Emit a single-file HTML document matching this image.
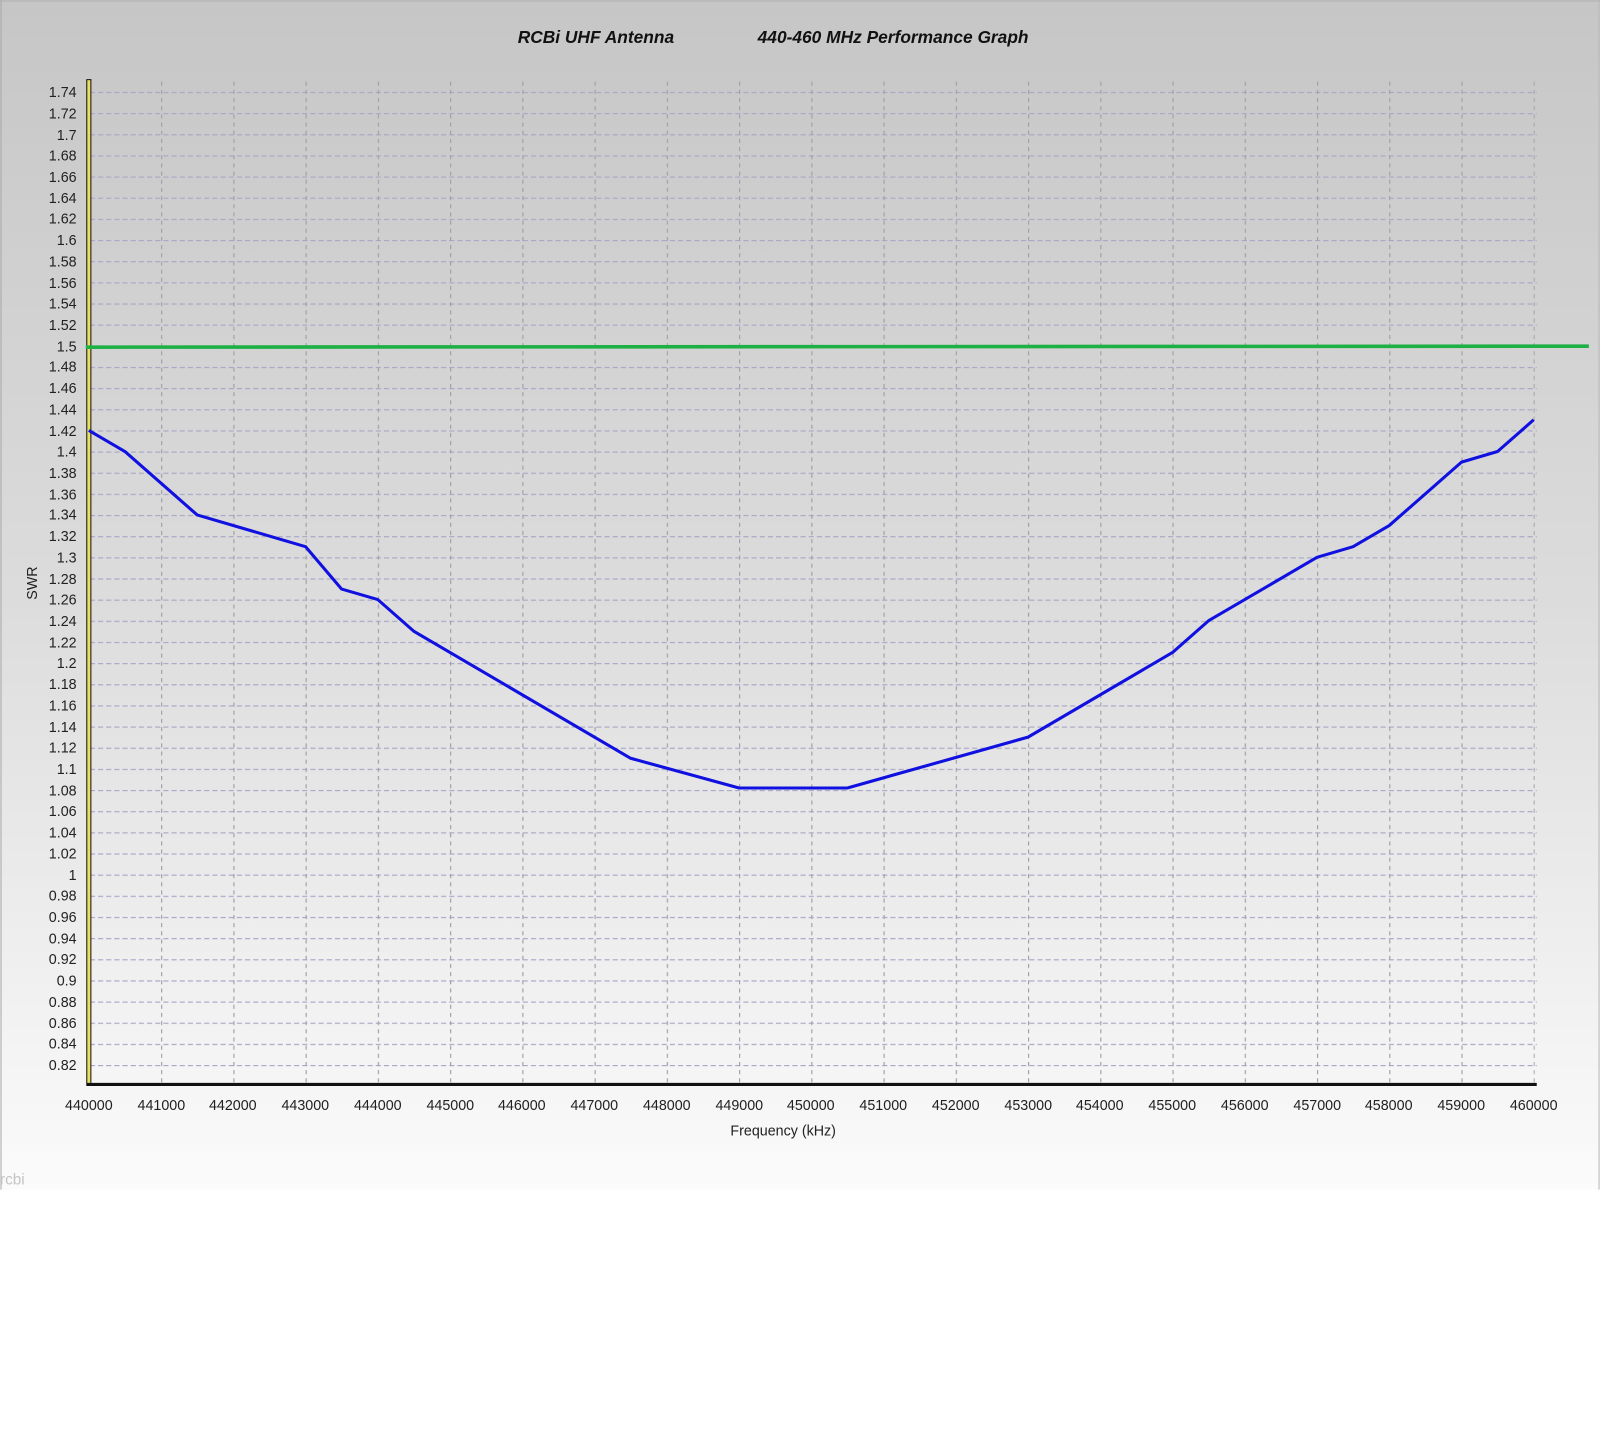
<!DOCTYPE html>
<html><head><style>
html,body{margin:0;padding:0;background:#fff;}
svg{display:block;font-family:"Liberation Sans",Arial,sans-serif;}
</style></head><body>
<svg width="1600" height="1433" viewBox="0 0 1600 1433" xmlns="http://www.w3.org/2000/svg">
<defs>
<linearGradient id="bg" x1="0" y1="0" x2="0" y2="1">
<stop offset="0" stop-color="#c6c6c6"/><stop offset="0.5" stop-color="#dcdcdc"/><stop offset="1" stop-color="#fbfbfb"/>
</linearGradient>
<pattern id="hg" patternUnits="userSpaceOnUse" x="0" y="90" width="8" height="20.717">
<line x1="0" y1="0.5" x2="5" y2="0.5" stroke="#a8a8c8" stroke-width="1.3"/>
</pattern>
<pattern id="vg" patternUnits="userSpaceOnUse" x="87" y="0" width="70.75" height="8">
<line x1="0.5" y1="0" x2="0.5" y2="4" stroke="#a0a0a8" stroke-width="1.3"/>
</pattern>
</defs>
<g transform="scale(1.0211)">
<rect x="0" y="0" width="1567" height="1165" fill="url(#bg)"/>
<line x1="1" y1="0" x2="1" y2="1165" stroke="#a8a8a8"/>
<line x1="1566" y1="0" x2="1566" y2="1165" stroke="#b8b8b8"/>
<line x1="0" y1="1" x2="1567" y2="1" stroke="#b0b0b0"/>
<text x="507" y="42" font-size="17" font-style="italic" font-weight="bold" fill="#111">RCBi UHF Antenna</text>
<text x="742" y="42" font-size="17" font-style="italic" font-weight="bold" fill="#111">440-460 MHz Performance Graph</text>
<rect x="89" y="86" width="1416" height="965" fill="url(#hg)"/>
<rect x="87" y="77" width="1416" height="984" fill="url(#vg)"/>
<g font-size="14" fill="#222" text-anchor="end">
<text x="75" y="95">1.74</text><text x="75" y="116">1.72</text><text x="75" y="137">1.7</text><text x="75" y="157">1.68</text><text x="75" y="178">1.66</text><text x="75" y="199">1.64</text><text x="75" y="219">1.62</text><text x="75" y="240">1.6</text><text x="75" y="261">1.58</text><text x="75" y="282">1.56</text><text x="75" y="302">1.54</text><text x="75" y="323">1.52</text><text x="75" y="344">1.5</text><text x="75" y="364">1.48</text><text x="75" y="385">1.46</text><text x="75" y="406">1.44</text><text x="75" y="427">1.42</text><text x="75" y="447">1.4</text><text x="75" y="468">1.38</text><text x="75" y="489">1.36</text><text x="75" y="509">1.34</text><text x="75" y="530">1.32</text><text x="75" y="551">1.3</text><text x="75" y="572">1.28</text><text x="75" y="592">1.26</text><text x="75" y="613">1.24</text><text x="75" y="634">1.22</text><text x="75" y="654">1.2</text><text x="75" y="675">1.18</text><text x="75" y="696">1.16</text><text x="75" y="717">1.14</text><text x="75" y="737">1.12</text><text x="75" y="758">1.1</text><text x="75" y="779">1.08</text><text x="75" y="799">1.06</text><text x="75" y="820">1.04</text><text x="75" y="841">1.02</text><text x="75" y="862">1</text><text x="75" y="882">0.98</text><text x="75" y="903">0.96</text><text x="75" y="924">0.94</text><text x="75" y="944">0.92</text><text x="75" y="965">0.9</text><text x="75" y="986">0.88</text><text x="75" y="1007">0.86</text><text x="75" y="1027">0.84</text><text x="75" y="1048">0.82</text>
</g>
<g font-size="14" fill="#222" text-anchor="middle">
<text x="87" y="1087">440000</text><text x="158" y="1087">441000</text><text x="228" y="1087">442000</text><text x="299" y="1087">443000</text><text x="370" y="1087">444000</text><text x="441" y="1087">445000</text><text x="511" y="1087">446000</text><text x="582" y="1087">447000</text><text x="653" y="1087">448000</text><text x="724" y="1087">449000</text><text x="794" y="1087">450000</text><text x="865" y="1087">451000</text><text x="936" y="1087">452000</text><text x="1007" y="1087">453000</text><text x="1077" y="1087">454000</text><text x="1148" y="1087">455000</text><text x="1219" y="1087">456000</text><text x="1290" y="1087">457000</text><text x="1360" y="1087">458000</text><text x="1431" y="1087">459000</text><text x="1502" y="1087">460000</text>
<text x="767" y="1112">Frequency (kHz)</text>
</g>
<text x="0" y="0" font-size="14" fill="#222" text-anchor="middle" transform="translate(36,571) rotate(-90)">SWR</text>
<rect x="85" y="78" width="4" height="985" fill="#e8e060" stroke="#111" stroke-width="1"/>
<line x1="85" y1="1062" x2="1505" y2="1062" stroke="#111" stroke-width="3"/>
<line x1="84" y1="340" x2="1556" y2="339" stroke="#1db044" stroke-width="3.5"/>
<polyline fill="none" stroke="#1010e0" stroke-width="3" stroke-linejoin="round" points="87,421.5 122.4,442.2 193.1,504.3 299.3,535.4 334.6,576.9 370,587.2 405.4,618.3 617.6,742.6 723.8,771.7 829.9,771.7 1006.8,721.9 1148.3,639 1183.6,607.9 1289.8,545.8 1325.1,535.4 1360.5,514.7 1431.3,452.6 1466.6,442.2 1502,411.1"/>
<text x="0" y="1160" font-size="15" fill="#c4c4c4">rcbi</text>
</g>
</svg>
</body></html>
